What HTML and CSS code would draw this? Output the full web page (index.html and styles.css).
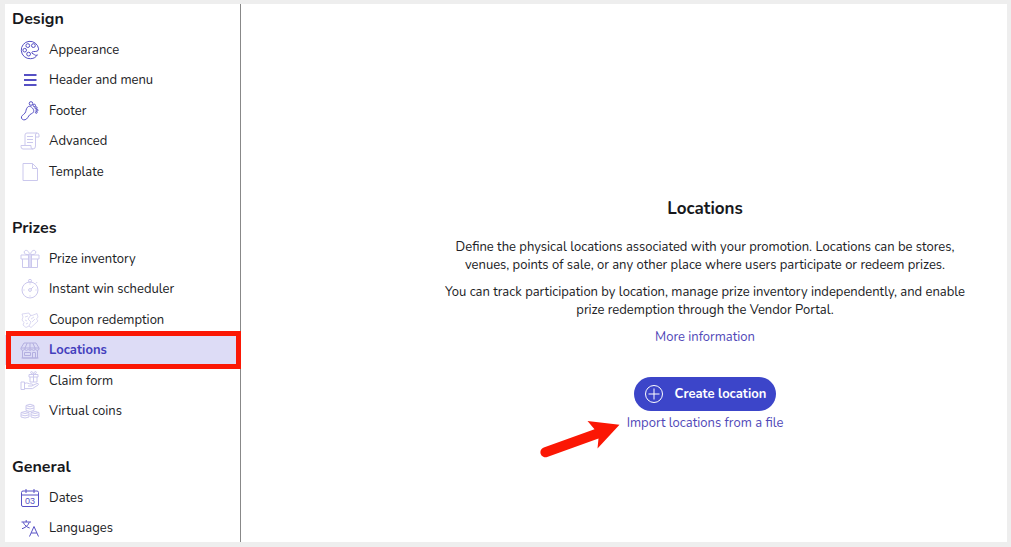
FILE: index.html
```html
<!DOCTYPE html>
<html lang="en">
<head>
<meta charset="utf-8">
<title>Locations</title>
<link rel="stylesheet" href="styles.css">
</head>
<body>
<div class="app">
  <nav class="sidebar">
    <section class="group">
      <h2>Design</h2>
      <ul>
        <li><a href="#"><svg viewBox="0 0 20 20"><path d="M18.6 8.8A8.7 8.7 0 1 0 10.5 18.7C14 18.7 16 17 17.4 14.8C16.2 15.6 15.2 15.4 14.4 14.6C13.5 13.8 12.6 13.8 12 13.2C11.4 12.5 12.3 11.4 13.5 11.5C15.6 11.7 18.8 11.4 18.6 8.8Z"/><circle cx="7.8" cy="5.6" r="1.9"/><circle cx="13.4" cy="5.6" r="1.9"/><circle cx="4.7" cy="10.2" r="1.8"/><circle cx="8.6" cy="14.1" r="1.9"/></svg>Appearance</a></li>
        <li><a href="#"><svg class="bold" viewBox="0 0 20 20"><path d="M4 5h12.5M4 10h12.5M4 15h12.5"/></svg>Header and menu</a></li>
        <li><a href="#"><svg viewBox="0 0 20 20"><path d="M7.5 6.2C9 4.4 11.6 5.6 13 7.8C14.6 10.2 13.4 12 11.2 12.8C8.8 13.8 8.6 16 6.5 18C4.8 19.5 2.2 19 1.5 17.2C.7 14.8 3.4 14 4.9 12.2C6.4 10.2 5.6 8.4 7.5 6.2Z"/><circle cx="11" cy="2.5" r="1.8"/><circle cx="14.3" cy="4.4" r="1.2"/><circle cx="16" cy="6.8" r="1.1"/><circle cx="17" cy="9.2" r="1"/><circle cx="16.3" cy="11.4" r=".9"/></svg>Footer</a></li>
        <li><a href="#"><svg class="pale" viewBox="0 0 20 20"><path d="M5 14V4Q5 2 7 2H17Q19 2 19 4V6H15.5V15Q15.5 18 13 18H3Q1 18 1 15.5V14.5H11V16Q11 18 13 18M15.5 6V4Q15.5 2 17 2M7 5.5h6M7 8.5h6M7 11.5h6"/></svg>Advanced</a></li>
        <li><a href="#"><svg class="pale" viewBox="0 0 20 20"><path d="M3 1.5H12.5L17.5 6.5V18.5H3ZM12.5 1.5V6.5H17.5"/></svg>Template</a></li>
      </ul>
    </section>
    <section class="group">
      <h2>Prizes</h2>
      <ul>
        <li><a href="#"><svg class="pale" viewBox="0 0 20 20"><path d="M1 6h18v4H1ZM2.5 10V18.5H17.5V10M8.5 6V18.5M11.5 6V18.5M9.3 5.7C6 5.7 4 5 4.2 3C4.6.4 8.7.7 9.5 5.5M10.7 5.7C14 5.7 16 5 15.8 3C15.4.4 11.3.7 10.5 5.5"/><path class="tint" d="M9 6h2v12H9z"/></svg>Prize inventory</a></li>
        <li><a href="#"><svg class="pale" viewBox="0 0 20 20"><circle cx="10" cy="11" r="8"/><circle cx="10" cy="1.8" r="1.5"/><circle cx="10" cy="11" r="1.4"/><path d="M11 10L13.5 7.5M10 4.5v1M10 16.5v1M3.5 11h1M15.5 11h1M15.7 4.5l1.3-1.3"/></svg>Instant win scheduler</a></li>
        <li><a href="#"><svg class="pale faint" viewBox="0 0 20 20"><path d="M2 4L9 3L10 5L12 5.5L17 3.5L18 7L16.5 9L18 11L11 17.5L9 16L6 17.5L3 15L4 12.5L2 10L3 7ZM11 5L8 9L11 12L9 16M5 7l3-1M5 10l2 1M11 9l3-2M12 12l3-3M6 14l2-1"/></svg>Coupon redemption</a></li>
        <li class="current"><a href="#" aria-current="page"><svg class="pale" viewBox="0 0 20 20"><path d="M4 3H16L19 8V9.5Q17.2 11.4 15.4 9.5Q13.6 11.4 11.8 9.5Q10 11.4 8.2 9.5Q6.4 11.4 4.6 9.5Q2.8 11.4 1 9.5V8ZM1 8H19M7.2 3L5 8V9.5M12.8 3L15 8V9.5M10 3V10M2.5 10.5V18H17.5V10.5M1.5 18h17M4.5 12.5h6v3h-6ZM12.5 18V12.5H15.5V18"/></svg>Locations</a></li>
        <li><a href="#"><svg class="pale" viewBox="0 0 20 20"><path d="M1 11H4.5V18.5H1ZM4.5 12.5C7.5 10.8 8 13.3 12 13C13.2 13.2 13 15 12 15H8M12.5 14.5L17 12.5C18.5 12 19 13.4 18 14L12.5 17.6H4.5M9 3.5h9v2.5H9ZM10 6V11H17V6M13.5 3.5V11M13.5 3.5C10 3 10 0 12 .7C13 1 13.5 3 13.5 3.5C13.5 3 14 1 15 .7C17 0 17 3 13.5 3.5"/></svg>Claim form</a></li>
        <li><a href="#"><svg class="pale" viewBox="0 0 20 20"><path d="M6 4.5Q10 2 14 4.5V9.5Q10 11.5 6 9.5ZM6 4.5Q10 7 14 4.5M6 7Q10 9 14 7M1 11.5Q5 9.5 9 11.5V16Q5 18 1 16ZM1 11.5Q5 13.5 9 11.5M1 13.8Q5 15.8 9 13.8M11 11.5Q15 9.5 19 11.5V16Q15 18 11 16ZM11 11.5Q15 13.5 19 11.5M11 13.8Q15 15.8 19 13.8"/></svg>Virtual coins</a></li>
      </ul>
    </section>
    <section class="group">
      <h2>General</h2>
      <ul>
        <li><a href="#"><svg viewBox="0 0 20 20"><rect x="1.5" y="3" width="17" height="15.5" rx="1.5"/><path d="M1.5 7h17M6 1v4M14 1v4"/><text x="10" y="16">03</text></svg>Dates</a></li>
        <li><a href="#"><svg viewBox="0 0 20 20"><path d="M1.5 4H11M6.2 2V4M3.2 4.3C4.5 7.5 7.5 9.5 9.7 10M9.3 4.3C8 8 4.5 10 2 10.7M9.5 18.5L14 8.5L18.5 18.5M11.2 15h5.6"/></svg>Languages</a></li>
      </ul>
    </section>
  </nav>
  <main class="content">
    <div class="intro">
      <h1>Locations</h1>
      <p>Define the physical locations associated with your promotion. Locations can be stores,<br>venues, points of sale, or any other place where users participate or redeem prizes.</p>
      <p>You can track participation by location, manage prize inventory independently, and enable<br>prize redemption through the Vendor Portal.</p>
      <a class="link" href="#">More information</a>
      <button class="create" type="button"><svg viewBox="0 0 20 20"><circle cx="10" cy="10" r="8.5"/><path d="M10 4.5v11M4.5 10h11"/></svg>Create location</button>
      <div class="import">
        <a class="link" href="#">Import locations from a file</a>
        <svg class="arrow" viewBox="0 0 80 38" aria-hidden="true"><path d="M3.8 27.4L54.5 9.2L47.5 1L79.5 4.8L57.5 28.5L58.5 18.5L7.2 37A5 5 0 0 1 3.8 27.4Z"/></svg>
      </div>
    </div>
  </main>
</div>
</body>
</html>
```
FILE: styles.css
```css
* { box-sizing: border-box; }

body {
  margin: 0;
  font: 13px/18px Nunito, "Noto Sans", sans-serif;
  color: #202124;
  background: #fff;
}

.app {
  display: flex;
  height: 100vh;
  overflow: hidden;
  border: solid #eee;
  border-width: 4px 4px 5px 5px;
}

.sidebar {
  flex: 0 0 236px;
  border-right: 1px solid #888;
}

.group { margin-bottom: 26px; }

h1, h2 {
  margin: 0;
  font-size: 16px;
  line-height: 22px;
  font-weight: 700;
  color: #17181c;
}

h2 { padding: 4px 7px; }

.sidebar ul {
  margin: 0;
  padding: 0;
  list-style: none;
}

.sidebar a {
  display: flex;
  align-items: center;
  gap: 9px;
  height: 31px;
  padding-left: 15px;
  color: inherit;
  text-decoration: none;
}

.sidebar li:nth-child(even) a { height: 30px; }

svg {
  flex: none;
  width: 20px;
  height: 20px;
  fill: none;
  stroke: #5650c4;
  stroke-width: 1;
}

svg.bold { stroke-width: 2; }
svg.pale { stroke: #cbc8ed; }
svg.faint { stroke-width: .7; }
svg .tint { fill: #dddbf5; stroke: none; }

svg text {
  font: 9px "Liberation Sans", sans-serif;
  text-anchor: middle;
  fill: #5650c4;
  stroke: none;
}

.current { position: relative; }

.sidebar .current a {
  color: #443fbd;
  font-weight: 700;
  background: #dddcf6;
}

.current svg.pale { stroke: #b3afe0; }

.current::after {
  content: "";
  position: absolute;
  inset: -4px -1px -4px 1px;
  border: 5px solid #fb1704;
  pointer-events: none;
}

.content {
  flex: 1;
  display: flex;
  justify-content: center;
  padding: 193px 0 0 162px;
}

.intro {
  display: flex;
  flex-direction: column;
  align-items: center;
  text-align: center;
}

h1 {
  margin-bottom: 18px;
  font-size: 17px;
  line-height: 23px;
}

p { margin: 0 0 9px; }

.link {
  color: #5048b8;
  text-decoration: none;
}

.create {
  display: flex;
  align-items: center;
  gap: 11px;
  height: 34px;
  margin: 31px 0 3px;
  padding: 0 10px;
  border: 0;
  border-radius: 17px;
  background: #3c45c9;
  color: #fff;
  font: inherit;
  font-weight: 700;
}

.create svg { stroke: #fff; }

.import { position: relative; }

.import .arrow {
  position: absolute;
  top: 6px;
  right: calc(100% + 7px);
  width: 80px;
  height: 38px;
  fill: #fb1704;
  stroke: none;
}
```
